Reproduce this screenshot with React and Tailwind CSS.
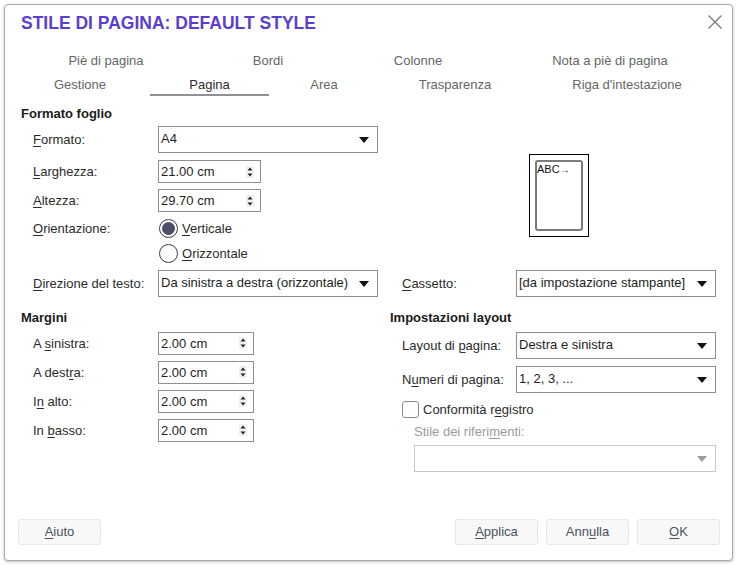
import React from 'react';

const FONT = { fontFamily: '"Liberation Sans", Arial, sans-serif' };

// small helper for mnemonic underline
const U = ({ children }) => <span className="underline underline-offset-2 decoration-1">{children}</span>;

const Arrow = ({ disabled }) => (
    <svg width="10" height="6" viewBox="0 0 10 6" className="shrink-0">
        <path d="M0 0 L10 0 L5 6 Z" fill={disabled ? '#9a9a9a' : '#111111'} />
    </svg>
);

const Dropdown = ({ value, width, disabled }) => (
    <div
        className={`h-[27px] flex items-start justify-between pl-[2px] pr-[8px] border ${disabled ? 'border-[#c9c9c9]' : 'border-[#8e8e8e]'} bg-white`}
        style={{ width }}
    >
        <span className="text-[13px] text-[#1e1e1e] leading-[15px] pt-[4px]">{value}</span>
        <div className="self-center">
            <Arrow disabled={disabled} />
        </div>
    </div>
);

const Spin = ({ value, width, height }) => (
    <div
        className="flex items-center justify-between pl-[2px] pr-[6px] border border-[#8e8e8e] bg-white"
        style={{ width, height }}
    >
        <span className="text-[13px] text-[#1e1e1e] leading-[15px]">{value}</span>
        <svg width="8" height="12" viewBox="0 0 8 12">
            <rect x="0" y="0" width="8" height="12" fill="#f0f0f0" />
            <path d="M1.5 4.5 L6.5 4.5 L4 1.5 Z" fill="#222" />
            <path d="M1.5 7.5 L6.5 7.5 L4 10.5 Z" fill="#222" />
        </svg>
    </div>
);

const Label = ({ children, className = '' }) => (
    <span className={`text-[13px] text-[#2b2b2b] leading-[15px] ${className}`}>{children}</span>
);

const row1 = [
    { label: 'Piè di pagina', w: 192 },
    { label: 'Bordi', w: 132 },
    { label: 'Colonne', w: 168 },
    { label: 'Nota a piè di pagina', w: 216 },
];
const row2 = [
    { label: 'Gestione', w: 140 },
    { label: 'Pagina', w: 119, active: true },
    { label: 'Area', w: 110 },
    { label: 'Trasparenza', w: 152 },
    { label: "Riga d'intestazione", w: 192 },
];

const Button = ({ children }) => (
    <button className="w-[83px] h-[26px] bg-[#f8f8f9] border border-[#e7e7e9] rounded-[3px] text-[13px] text-[#4b5262] flex items-center justify-center">
        {children}
    </button>
);

export default function App() {
    return (
        <div className="w-[736px] h-[566px] bg-white pl-[4px] pt-[4px] overflow-hidden" style={FONT}>
            <div className="w-[729px] h-[557px] border border-[#a9a9a9] rounded-[4px] shadow-[0_1px_3px_rgba(0,0,0,0.25)] bg-white flex flex-col">
                {/* title */}
                <div className="h-[34px] flex items-center justify-between pl-[16px] pr-[7px]">
                    <span className="text-[17.5px] font-bold text-[#5a3fcf] leading-[20px] pt-[1px]">STILE DI PAGINA: DEFAULT STYLE</span>
                    <svg width="16" height="16" viewBox="0 0 16 16" className="mr-[2px]">
                        <path d="M1.5 1.5 L14.5 14.5 M14.5 1.5 L1.5 14.5" stroke="#7a7a7a" strokeWidth="1.3" />
                    </svg>
                </div>

                {/* tabs */}
                <div className="mt-[10px] pl-[5px]">
                    <div className="flex h-[24px]">
                        {row1.map((t) => (
                            <div key={t.label} className="flex items-center justify-center text-[13px] text-[#666666]" style={{ width: t.w }}>
                                {t.label}
                            </div>
                        ))}
                    </div>
                    <div className="flex h-[23px]">
                        {row2.map((t) => (
                            <div
                                key={t.label}
                                className={`flex items-center justify-center pt-[3px] text-[13px] ${t.active ? 'text-[#2e2e2e] border-b-2 border-[#8f9196]' : 'text-[#666666] border-b-2 border-transparent'}`}
                                style={{ width: t.w }}
                            >
                                {t.label}
                            </div>
                        ))}
                    </div>
                </div>

                {/* Formato foglio */}
                <div className="pl-[16px] mt-[10px]">
                    <div className="h-[16px] flex items-center text-[13px] font-bold text-[#1a1a1a]">Formato foglio</div>
                    <div className="flex">
                        <div className="w-[369px] pl-[12px]">
                            <div className="mt-[4px] h-[27px] flex items-center">
                                <Label className="w-[125px]"><U>F</U>ormato:</Label>
                                <Dropdown value="A4" width={220} />
                            </div>
                            <div className="mt-[7px] h-[23px] flex items-center">
                                <Label className="w-[125px]"><U>L</U>arghezza:</Label>
                                <Spin value="21.00 cm" width={103} height={23} />
                            </div>
                            <div className="mt-[6px] h-[23px] flex items-center">
                                <Label className="w-[125px]"><U>A</U>ltezza:</Label>
                                <Spin value="29.70 cm" width={103} height={23} />
                            </div>
                            <div className="mt-[6px] h-[20px] flex items-center">
                                <Label className="w-[126px]"><U>O</U>rientazione:</Label>
                                <div className="w-[19px] h-[19px] rounded-full border border-[#3a3a3a] flex items-center justify-center">
                                    <div className="w-[13px] h-[13px] rounded-full bg-[#4b5068]" />
                                </div>
                                <Label className="ml-[4px]"><U>V</U>erticale</Label>
                            </div>
                            <div className="mt-[5px] h-[20px] flex items-center">
                                <div className="w-[126px]" />
                                <div className="w-[19px] h-[19px] rounded-full border border-[#3a3a3a]" />
                                <Label className="ml-[4px]"><U>O</U>rizzontale</Label>
                            </div>
                        </div>
                        <div className="flex-1 pl-[139px] pt-[32px]">
                            <div className="w-[60px] h-[83px] border border-black p-[5px]">
                                <div className="w-full h-full border-2 border-[#7a7a7a] rounded-[3px] text-[11px] leading-[12px] text-[#111] pt-[1px]">
                                    ABC<span className="text-[10px]">→</span>
                                </div>
                            </div>
                        </div>
                    </div>
                    <div className="mt-[7px] h-[27px] flex items-center">
                        <div className="w-[369px] pl-[12px] flex items-center">
                            <Label className="w-[125px]"><U>D</U>irezione del testo:</Label>
                            <Dropdown value="Da sinistra a destra (orizzontale)" width={220} />
                        </div>
                        <div className="pl-[12px] flex items-center">
                            <Label className="w-[114px]"><U>C</U>assetto:</Label>
                            <Dropdown value="[da impostazione stampante]" width={200} />
                        </div>
                    </div>
                </div>

                {/* Margini + Impostazioni layout */}
                <div className="pl-[16px] mt-[13px] flex">
                    <div className="w-[369px]">
                        <div className="h-[16px] flex items-center text-[13px] font-bold text-[#1a1a1a]">Margini</div>
                        <div className="pl-[12px]">
                            {[
                                [<>A <U>s</U>inistra:</>, 6],
                                [<>A dest<U>r</U>a:</>, 7],
                                [<>I<U>n</U> alto:</>, 7],
                                [<>In <U>b</U>asso:</>, 7],
                            ].map(([l, mt], i) => (
                                <div key={i} className="h-[22px] flex items-center" style={{ marginTop: mt }}>
                                    <Label className="w-[125px]">{l}</Label>
                                    <Spin value="2.00 cm" width={96} height={23} />
                                </div>
                            ))}
                        </div>
                    </div>
                    <div className="flex-1">
                        <div className="h-[16px] flex items-center text-[13px] font-bold text-[#1a1a1a]">Impostazioni layout</div>
                        <div className="pl-[12px]">
                            <div className="mt-[6px] h-[27px] flex items-center">
                                <Label className="w-[114px]">Layout di <U>p</U>agina:</Label>
                                <Dropdown value="Destra e sinistra" width={200} />
                            </div>
                            <div className="mt-[7px] h-[27px] flex items-center">
                                <Label className="w-[114px]">N<U>u</U>meri di pagina:</Label>
                                <Dropdown value="1, 2, 3, ..." width={200} />
                            </div>
                            <div className="mt-[8px] h-[16px] flex items-center">
                                <div className="w-[17px] h-[17px] border border-[#8a8a8a] rounded-[3px] bg-white" />
                                <Label className="ml-[4px]">Conformità r<U>e</U>gistro</Label>
                            </div>
                            <div className="pl-[12px]">
                                <div className="mt-[7px] h-[16px] flex items-center">
                                    <span className="text-[13px] text-[#9a9a9a]">Stile dei riferi<U>m</U>enti:</span>
                                </div>
                                <div className="mt-[5px]">
                                    <Dropdown value="" width={302} disabled />
                                </div>
                            </div>
                        </div>
                    </div>
                </div>

                {/* footer buttons */}
                <div className="mt-auto mb-[15px] pl-[13px] pr-[12px] flex items-center">
                    <Button><U>A</U>iuto</Button>
                    <div className="flex-1" />
                    <div className="flex gap-[8px]">
                        <Button><U>A</U>pplica</Button>
                        <Button>Ann<U>u</U>lla</Button>
                        <Button><U>O</U>K</Button>
                    </div>
                </div>
            </div>
        </div>
    );
}
